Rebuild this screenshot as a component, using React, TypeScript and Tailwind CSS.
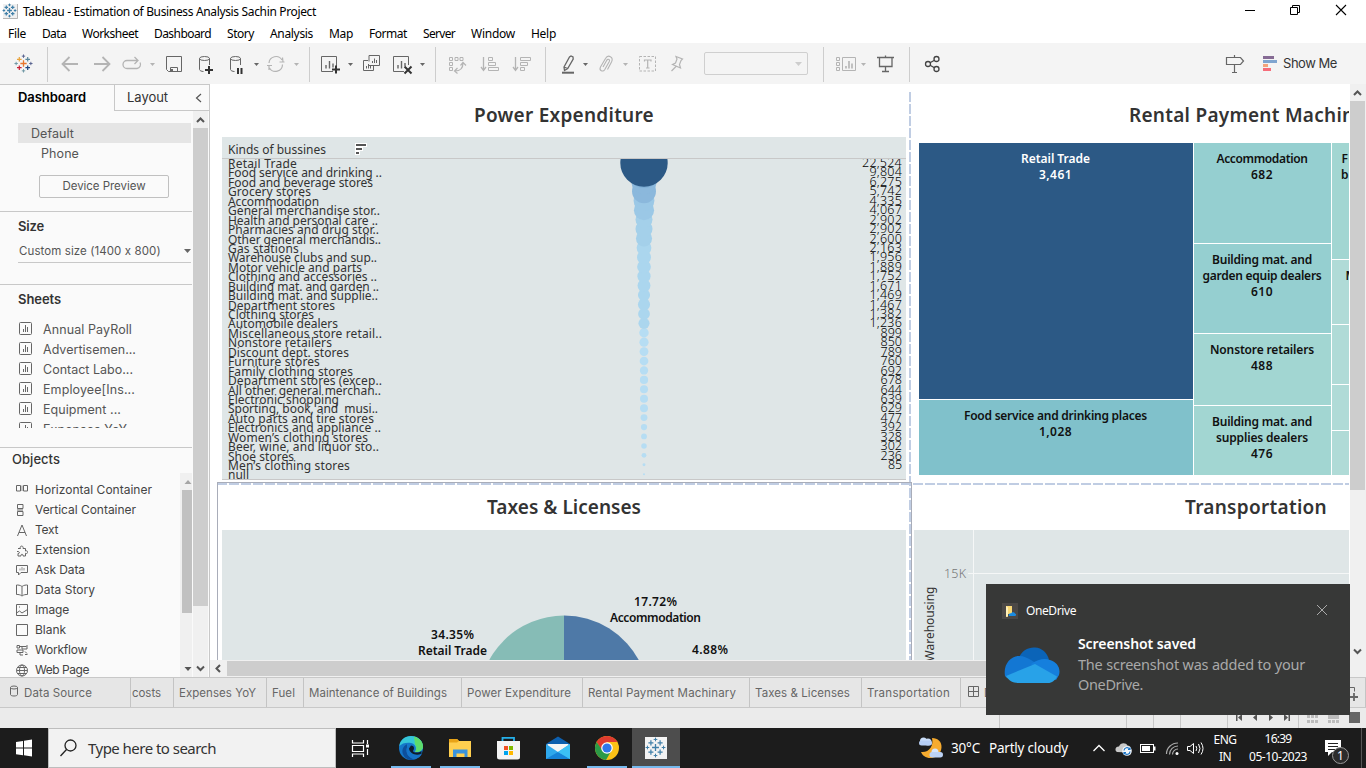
import React, { useLayoutEffect, useRef, useState } from "react";

const NOTO = "font-['Noto_Sans','Open_Sans',sans-serif]";
const INTER = "font-['Inter','Noto_Sans',sans-serif]";

/* Single line of text tracked to an exact width. */
function Fit({ w, children, className = "" }: { w: number; children: string; className?: string }) {
  const ref = useRef<HTMLSpanElement>(null);
  const [ls, setLs] = useState(0);
  useLayoutEffect(() => {
    if (!ref.current) return;
    const natural = ref.current.getBoundingClientRect().width;
    setLs((w - natural) / Math.max(1, children.length));
  }, [w, children]);
  return (
    <span className={"block shrink-0 whitespace-pre " + className} style={{ width: w }}>
      <span ref={ref} className="inline-block" style={{ letterSpacing: ls }}>
        {children}
      </span>
    </span>
  );
}

/* Slice of a bar: user units equal page pixels, so neighbours tile without gaps. */
function Strip({ x, to, y, h, children }: { x: number; to: number; y: number; h: number; children?: React.ReactNode }) {
  return (
    <svg className="block shrink-0" width={to - x} height={h} viewBox={`${x} ${y} ${to - x} ${h}`} fill="none">
      {children}
    </svg>
  );
}

const Tool = ({ x, to, children }: { x: number; to: number; children?: React.ReactNode }) => (
  <Strip x={x} to={to} y={43} h={41}>
    {children}
  </Strip>
);
const Divider = () => <div className="mt-1 h-[35px] w-px shrink-0 bg-[#cdcdcd]" />;
const caret = (x: number, c = "#666") => <path d={`M${x} 63h5l-2.5 3z`} fill={c} />;

function Plus({ x, y, r, c, s = 1 }: { x: number; y: number; r: number; c: string; s?: number }) {
  return <path d={`M${x - r} ${y}h${2 * r}M${x} ${y - r}v${2 * r}`} stroke={c} strokeWidth={s} />;
}

function TableauMark({ x, y, k = 1, mono = false }: { x: number; y: number; k?: number; mono?: boolean }) {
  const m = (c: string) => (mono ? "#3f7fa8" : c);
  return (
    <g>
      <Plus x={x} y={y} r={3 * k} c={m("#e8762c")} s={1.3} />
      <Plus x={x - 4 * k} y={y - 4 * k} r={2.2 * k} c={m("#e8a33c")} s={1.2} />
      <Plus x={x + 4 * k} y={y - 4 * k} r={2.2 * k} c={m("#5b879b")} s={1.2} />
      <Plus x={x - 4 * k} y={y + 4 * k} r={2.2 * k} c={m("#c72035")} s={1.2} />
      <Plus x={x + 4 * k} y={y + 4 * k} r={2.2 * k} c={m("#1f457e")} s={1.2} />
      <Plus x={x} y={y - 7 * k} r={1.6 * k} c={m("#5b6591")} />
      <Plus x={x} y={y + 7 * k} r={1.6 * k} c={m("#7199a6")} />
      <Plus x={x - 7 * k} y={y} r={1.6 * k} c={m("#7199a6")} />
      <Plus x={x + 7 * k} y={y} r={1.6 * k} c={m("#5b6591")} />
    </g>
  );
}

function TitleBar() {
  return (
    <div className={"flex h-6 shrink-0 items-center bg-white text-[12px] text-black " + NOTO}>
      <Strip x={0} to={23} y={0} h={24}>
        <rect x={3} y={4} width={15} height={15} fill="#f0f0f0" />
        <path d="M3 18.500h14.500V4" stroke="#b5b5b5" />
        <TableauMark x={9.5} y={10.5} k={0.8} mono />
      </Strip>
      <Fit w={293}>Tableau - Estimation of Business Analysis Sachin Project</Fit>
      <div className="flex-1" />
      <Strip x={1235} to={1366} y={0} h={24}>
        <path d="M1245 10.500h10" stroke="#000" />
        <path d="M1290.500 7.500h7v7h-7zM1292.500 7v-1.500h7v7h-1.500" stroke="#000" />
        <path d="M1336 5l10 10M1346 5l-10 10" stroke="#000" strokeWidth={1.1} />
      </Strip>
    </div>
  );
}

const menu: [string, number][] = [
  ["File", 18], ["Data", 24], ["Worksheet", 56], ["Dashboard", 57], ["Story", 27],
  ["Analysis", 43], ["Map", 24], ["Format", 38], ["Server", 32], ["Window", 44], ["Help", 25],
];

function MenuBar() {
  return (
    <div className={"flex h-[19px] shrink-0 items-center gap-4 bg-white pl-2 text-[12px] leading-[19px] text-black " + NOTO}>
      {menu.map(([t, w]) => (
        <Fit key={t} w={w}>{t}</Fit>
      ))}
    </div>
  );
}

function Toolbar() {
  const g = "#b4b4b4";
  const d = "#666";
  return (
    <div className="flex h-[41px] shrink-0 bg-[#f4f4f4]">
      <Tool x={0} to={47}><TableauMark x={23.5} y={63.5} k={1.05} /></Tool>
      <Divider />
      <Tool x={48} to={86}><path d="M78 64H63M69.500 57l-7 7 7 7" stroke={g} strokeWidth={1.8} /></Tool>
      <Tool x={86} to={116}><path d="M94 64h15M102.500 57l7 7-7 7" stroke={g} strokeWidth={1.8} /></Tool>
      <Tool x={116} to={160}>
        <path d="M130 60.500h-3a4 4 0 0 0 0 8h10a4 4 0 0 0 3-6M129 60.500h9M134.500 57l3.500 3.500-3.500 3.500" stroke={g} strokeWidth={1.3} />
        {caret(150, g)}
      </Tool>
      <Tool x={160} to={190}>
        <path d="M166.500 56.500h15v15h-13l-2-2z" stroke={d} />
        <path d="M170.500 71v-3.500h7V71" stroke={d} />
        <path d="M171 69h2v2h-2z" fill={d} />
      </Tool>
      <Tool x={190} to={222}>
        <path d="M209.500 65v-6.500M199.500 58.500v11c0 1 2 2 4 2" stroke={d} />
        <ellipse cx={204.500} cy={58.500} rx={5} ry={2} stroke={d} />
        <path d="M205 70h8M209 66v8" stroke="#333" strokeWidth={2} />
      </Tool>
      <Tool x={222} to={263}>
        <path d="M240.500 65v-6.500M230.500 58.500v11c0 1 2 2 4 2" stroke={d} />
        <ellipse cx={235.500} cy={58.500} rx={5} ry={2} stroke={d} />
        <path d="M238 68v6M241.500 68v6" stroke="#333" strokeWidth={2} />
        {caret(254)}
      </Tool>
      <Tool x={263} to={309}>
        <path d="M269 63a7 7 0 0 1 13-3M282.500 64.500a7 7 0 0 1-13 3.500M279.500 62h5M282.500 57.500l.5 4.500M267 65.500h5M269 70v-4" stroke={g} strokeWidth={1.2} />
        {caret(294, g)}
      </Tool>
      <Divider />
      <Tool x={310} to={356}>
        <path d="M333 71.500h-11.500v-15h15V66" stroke={d} />
        <path d="M326 65v3.500M329.500 61v7.500M333 63.500v4" stroke={d} strokeWidth={1.4} />
        <path d="M332 69.500h8M336 65.500v8" stroke="#333" strokeWidth={2} />
        {caret(348)}
      </Tool>
      <Tool x={356} to={386}>
        <path d="M369 61.500v-6h10.500v10h-10.500M368 60.500h-4.500v10h10V66" stroke={d} />
        <path d="M372.500 61v2M374.500 58.500v4.500M376.500 60v3M366.500 66v2.500M368.500 64v4.500M370.500 66v2.500" stroke={d} />
      </Tool>
      <Tool x={386} to={435}>
        <path d="M404 71.500h-10.500v-15h15V65" stroke={d} />
        <path d="M398 65v3.500M401.500 61v7.500M405 63v3" stroke={d} strokeWidth={1.4} />
        <path d="M404.500 66.500l7 7M411.500 66.500l-7 7" stroke="#333" strokeWidth={2} />
        {caret(420)}
      </Tool>
      <Divider />
      <Tool x={436} to={474}>
        <path d="M449.500 57.500h3v3h-3zM455 57.500h3v3h-3zM460 57.500h3v3h-3zM449.500 62.500h3v3h-3zM449.500 67.500h3v3h-3z" stroke={g} />
        <path d="M455 71c5 0 8-3 8-8M457.500 68l-3 3 3 2.500M460.500 65.500l2.500-3 3 3" stroke={g} strokeWidth={1.2} />
      </Tool>
      <Tool x={474} to={506}>
        <path d="M483.500 57v13M481 67l2.500 3.500 2.500-3.500" stroke={g} strokeWidth={1.3} />
        <path d="M488.500 57.500h4v3h-4zM488.500 62.500h7v3h-7zM488.500 67.500h10v3h-10z" stroke={g} />
      </Tool>
      <Tool x={506} to={545}>
        <path d="M515.500 57v13M513 67l2.500 3.500 2.500-3.500" stroke={g} strokeWidth={1.3} />
        <path d="M520.500 57.500h10v3h-10zM520.500 62.500h7v3h-7zM520.500 67.500h4v3h-4z" stroke={g} />
      </Tool>
      <Divider />
      <Tool x={546} to={592}>
        <path d="M564 67l5.500-10 1.500-1 2 1 .2 2-5.500 9.500-3.200 2zM564 67l3.500 1.500" stroke={d} strokeWidth={1.3} />
        <path d="M562 72.700h12" stroke={d} strokeWidth={2} />
        {caret(583)}
      </Tool>
      <Tool x={592} to={632}>
        <path d="M603 67l4.500-8M607.500 69.500l4-7.500c2.500-5-3.500-8-6-3.500l-5 8.500c-1.800 3.500 2.500 5.500 4.300 2.500l4.500-8c1-2-1.200-3-2.300-1.300" stroke={g} strokeWidth={1.1} />
        {caret(623, g)}
      </Tool>
      <Tool x={632} to={662}>
        <rect x={639.500} y={56.500} width={16} height={14.500} stroke={g} strokeDasharray="2.500 1.500" />
        <path d="M644.500 61.500v-1.500h6.500v1.500M647.700 60v8M646 68h3.500" stroke={g} strokeWidth={1.2} />
      </Tool>
      <Tool x={662} to={704}>
        <path d="M676 56.500l6.500 2.500-1.500 1.500-1.500 4 1 3.500-8-3.500 3-1.500 1.500-4zM676 66.500l-4.500 4.500" stroke={g} strokeWidth={1.2} />
      </Tool>
      <div className="mt-[9px] flex h-[23px] w-[104px] shrink-0 items-center justify-end rounded-[2px] border border-[#cfcfcf] pr-[5px]">
        <svg width="7" height="4"><path d="M0 0h7L3.500 4z" fill="#cdcdcd" /></svg>
      </div>
      <div className="w-[15px] shrink-0" />
      <Divider />
      <Tool x={824} to={870}>
        <path d="M836.500 57.500h3v3h-3zM836.500 62.500h3v3h-3zM836.500 67.500h3v3h-3zM842.500 57.500h13v13h-13z" stroke={g} />
        <path d="M846 66v2.500M849 61v7.500M852 63.500v5" stroke={g} strokeWidth={1.6} />
        {caret(861, g)}
      </Tool>
      <Tool x={870} to={909}>
        <path d="M877 57.500h17M879.500 58v8.500h12.500V58M885.500 55.500v2M885.500 67v4.500M882 71.500h7" stroke={d} strokeWidth={1.3} />
      </Tool>
      <Divider />
      <Tool x={910} to={950}>
        <circle cx={928} cy={64} r={2.500} stroke="#444" strokeWidth={1.3} />
        <circle cx={936.500} cy={59} r={2.500} stroke="#444" strokeWidth={1.3} />
        <circle cx={936.500} cy={69} r={2.500} stroke="#444" strokeWidth={1.3} />
        <path d="M930 62.700l4.500-2.500M930 65.300l4.500 2.500" stroke="#444" strokeWidth={1.3} />
      </Tool>
      <div className="flex-1" />
      <Tool x={1220} to={1256}>
        <path d="M1226.500 57.500h14l3 3.500-3 3.500h-14zM1234.500 55v2.500M1234.500 64.500v8M1232 72.500h5" stroke={d} strokeWidth={1.2} />
      </Tool>
      <Tool x={1256} to={1283}>
        <path d="M1263 56h11v3h-11z" fill="#866b94" />
        <path d="M1263 60h14v3h-14z" fill="#7fa5d0" />
        <path d="M1263 64h5v3h-5z" fill="#f3a47c" />
        <path d="M1263 68h8v3h-8z" fill="#f66d7a" />
      </Tool>
      <Fit w={54} className={"mr-[29px] text-[13px] leading-[40px] text-[#333] " + INTER}>Show Me</Fit>
    </div>
  );
}

const sheets: [string, number][] = [
  ["Annual PayRoll", 89], ["Advertisemen...", 93], ["Contact Labo...", 90],
  ["Employee[Ins...", 92], ["Equipment ...", 78], ["Expenses YoY", 84],
];

const objIcons: React.ReactNode[] = [
  <g><path d="M5 1.500h2v5.500H5z" fill="#c4c4c4" stroke="none" /><path d="M.5 1.500h4v5.500h-4zM7.500 1.500h4v5.500h-4z" /></g>,
  <g><path d="M1 4.500h6v3H1z" fill="#b4b4b4" stroke="none" /><path d="M1.500.500h5.500v4h-5.500zM1.500 7.500h5.500v4h-5.500z" /></g>,
  <path d="M1.500 12L6 1l4.500 11M3 8.500h6" />,
  <path d="M2 4.500h2.500c-1.500-3 3.500-3.500 2.500 0h2.500v2.500c3-1.200 3 3.500 0 2.300V12H7c.8-2.300-2.800-2.300-2 0H2V9.500c2 .5 2-2.500-1-2" />,
  <g><path d="M3 4.500h2V3h2v1h2v2.500H3z" fill="#c4c4c4" stroke="none" /><path d="M.5 1.500h11v7H5L2.500 11V8.500h-2z" /></g>,
  <path d="M6 2.500C4 1 2 1 .5 1v9.500c2 0 3.500 0 5.500 1.500 2-1.500 3.500-1.500 5.500-1.500V1C10 1 8 1 6 2.500zM6 3v8" />,
  <path d="M.5.500h11v11H.500zM.500 9l3-2 2.500 2 5.500-3.500M3 3h1" />,
  <path d="M.5.500h11v11H.500z" />,
  <path d="M1 1.500h2.500v2.500H1zM3.500 2.500h7M11 1v4H6V3M1 6h6v2.500H1zM4 8.500V11h3M9 7.500l2 2M9 10.500h2.500" />,
  <g><circle cx={6} cy={6.5} r={5.500} /><ellipse cx={6} cy={6.5} rx={2.500} ry={5.500} /><path d="M.500 6.500h11M1.500 3.500h9M1.500 9.500h9" /></g>,
];
const objects: [string, number][] = [
  ["Horizontal Container", 117], ["Vertical Container", 101], ["Text", 23], ["Extension", 55], ["Ask Data", 50],
  ["Data Story", 60], ["Image", 34], ["Blank", 31], ["Workflow", 52], ["Web Page", 54],
];

function Sidebar() {
  return (
    <div className={"flex w-[210px] shrink-0 flex-col border-t border-r border-[#c8c8c8] bg-[#fafafa] text-[12.500px] text-[#555] " + INTER}>
      <div className="flex h-[26px] shrink-0 leading-[25px]">
        <Fit w={68} className="ml-[18px] text-[13px] font-semibold text-black">Dashboard</Fit>
        <div className="ml-7 flex flex-1 items-center border-b border-l border-[#c8c8c8] pl-3">
          <Fit w={41} className="text-[13px] text-[#333]">Layout</Fit>
          <svg className="ml-[27px]" width="8" height="10" fill="none"><path d="M6 1L1.500 5 6 9" stroke="#555" strokeWidth="1.200" /></svg>
        </div>
      </div>
      <div className="flex min-h-0 flex-1">
        <div className="flex w-[192px] shrink-0 flex-col overflow-hidden">
          <div className="mt-3 ml-[18px] h-5 w-[173px] shrink-0 bg-[#e5e5e5] pl-[13px] leading-[22px]"><Fit w={43}>Default</Fit></div>
          <div className="h-5 shrink-0 pl-[41px] leading-[22px]"><Fit w={38}>Phone</Fit></div>
          <div className="mt-3 ml-[39px] flex h-[23px] w-[130px] shrink-0 items-center justify-center rounded-[2px] border border-[#c0c0c0] text-[11.500px]"><Fit w={83}>Device Preview</Fit></div>
          <div className="mt-[13px] h-px shrink-0 bg-[#c8c8c8]" />
          <div className="h-[28px] shrink-0 pl-[18px] text-[13px] leading-[29px] font-semibold text-[#333]"><Fit w={26}>Size</Fit></div>
          <div className="ml-[18px] flex h-[23px] w-[173px] shrink-0 items-center justify-between border-b border-[#c8c8c8] pl-px text-[11.500px]">
            <Fit w={143} className="pt-[2px]">Custom size (1400 x 800)</Fit>
            <svg width="7" height="4"><path d="M0 0h7L3.500 4z" fill="#666" /></svg>
          </div>
          <div className="mt-[21px] h-px shrink-0 bg-[#c8c8c8]" />
          <div className="h-[34px] shrink-0 pl-[18px] text-[13px] leading-[28px] font-semibold text-[#333]"><Fit w={43}>Sheets</Fit></div>
          <div className="h-[109px] shrink-0 overflow-hidden">
            {sheets.map(([t, w]) => (
              <div key={t} className="flex h-5 items-center pl-[19px] leading-[20px]">
                <svg className="mr-[11px] -mt-px" width="13" height="13" fill="none" stroke="#666">
                  <rect x=".5" y=".5" width="12" height="12" rx="1" />
                  <path d="M4.500 7v3M6.500 3v7M8.500 5v5" />
                </svg>
                <Fit w={w} className="pt-[2px]">{t}</Fit>
              </div>
            ))}
          </div>
          <div className="mt-[19px] h-px shrink-0 bg-[#c8c8c8]" />
          <div className="h-[25px] shrink-0 pl-3 text-[13px] leading-[23px] font-medium text-[#333]"><Fit w={48}>Objects</Fit></div>
          <div className="flex min-h-0 flex-1">
            <div className="w-[180px] pt-[7px] text-[12px] text-[#444]">
              {objects.map(([t, w], i) => (
                <div key={t} className="flex h-5 items-center pl-4 leading-[20px]">
                  <svg className="mr-[7px]" width="12" height="13" fill="none" stroke="#666">{objIcons[i]}</svg>
                  <Fit w={w}>{t}</Fit>
                </div>
              ))}
            </div>
            <div className="flex flex-1 flex-col bg-[#f0f0f0] pl-[2px]">
              <svg className="h-[17px] w-[10px] shrink-0" viewBox="0 0 10 17"><path d="M2.500 11h7L6 7z" fill="#a5a5a5" /></svg>
              <div className="h-[123px] shrink-0 bg-[#c1c1c1]" />
              <div className="flex-1" />
              <svg className="h-[17px] w-[10px] shrink-0" viewBox="0 0 10 17"><path d="M2.500 7h7L6 11z" fill="#555" /></svg>
            </div>
          </div>
        </div>
        <div className="ml-px flex w-[15px] flex-col bg-[#f0f0f0]">
          <svg width="15" height="17" fill="none" stroke="#555" strokeWidth="2"><path d="M4 11l3.500-3.500L11 11" /></svg>
          <div className="h-[478px] bg-[#cdcdcd]" />
          <div className="flex-1" />
          <svg width="15" height="17" fill="none" stroke="#555" strokeWidth="2"><path d="M4 6.500L7.500 10 11 6.500" /></svg>
        </div>
      </div>
    </div>
  );
}

/* label, right edge, value, printed value */
const kinds: [string, number, number, string][] = [
  ["Retail Trade", 297, 22524, "22,524"], ["Food service and drinking ..", 382, 9804, "9,804"],
  ["Food and beverage stores", 373, 6275, "6,275"], ["Grocery stores", 311, 5742, "5,742"],
  ["Accommodation", 319, 4335, "4,335"], ["General merchandise stor..", 380, 4067, "4,067"],
  ["Health and personal care ..", 378, 2902, "2,902"], ["Pharmacies and drug stor..", 379, 2902, "2,902"],
  ["Other general merchandis..", 381, 2600, "2,600"], ["Gas stations", 299, 2163, "2,163"],
  ["Warehouse clubs and sup..", 377, 1956, "1,956"], ["Motor vehicle and parts", 362, 1889, "1,889"],
  ["Clothing and accessories ..", 377, 1752, "1,752"], ["Building mat. and garden ..", 379, 1671, "1,671"],
  ["Building mat. and supplie..", 378, 1469, "1,469"], ["Department stores", 335, 1467, "1,467"],
  ["Clothing stores", 314, 1382, "1,382"], ["Automobile dealers", 338, 1236, "1,236"],
  ["Miscellaneous store retail..", 382, 899, "899"], ["Nonstore retailers", 332, 850, "850"],
  ["Discount dept. stores", 349, 789, "789"], ["Furniture stores", 320, 760, "760"],
  ["Family clothing stores", 353, 692, "692"], ["Department stores (excep..", 382, 678, "678"],
  ["All other general merchan..", 381, 644, "644"], ["Electronic shopping", 339, 639, "639"],
  ["Sporting, book, and  musi..", 378, 629, "629"], ["Auto parts and tire stores", 374, 477, "477"],
  ["Electronics and appliance ..", 381, 392, "392"], ["Women’s clothing stores", 368, 328, "328"],
  ["Beer, wine, and liquor sto..", 379, 302, "302"], ["Shoe stores", 294, 236, "236"],
  ["Men’s clothing stores", 350, 85, "85"], ["null", 249, 40, ""],
];

const shade = (v: number) =>
  v > 20000 ? "#2c5985" : v > 9000 ? "#7fafd6" : v > 5000 ? "#8bb8dc" : v > 4000 ? "#9bc8e6" : v > 2500 ? "#a4d0ea" : v > 1000 ? "#abd6ee" : "#b6ddf3";

const valueWidth: Record<number, number> = { 6: 40, 5: 32.5, 3: 21.5, 2: 14, 0: 0 };

function PowerPanel() {
  return (
    <div className="flex h-full flex-col pl-3">
      <div className="flex h-[53px] shrink-0 justify-center pt-[11px] pr-[5px] text-[19px] leading-[40px] font-semibold text-[#333]"><Fit w={180}>Power Expenditure</Fit></div>
      <div className="mr-1 flex h-[343px] w-[684px] flex-col border-b border-[#c8c8c8] bg-[#dfe6e7]">
        <div className="flex h-[22px] shrink-0 border-b border-[#c8c8c8] pl-1.5 text-[12px] leading-[25px] text-[#333]">
          <Fit w={98}>Kinds of bussines</Fit>
          <svg className="ml-[29px] mt-[6px]" width="12" height="12">
            <path d="M0 0h12v4H8v4H5v4H0z" fill="#fff" />
            <path d="M1 1h10v2H1zM1 5h6v2H1zM1 9h3v2H1z" fill="#555" />
          </svg>
        </div>
        <div className="flex flex-1 overflow-hidden pl-1.5 pr-1">
          <div className="w-[160px] text-[12px] text-[#333]">
            {kinds.map(([t, e], i) => (
              <div key={i} className="h-[9.450px] leading-[9.450px]"><Fit w={e - 228}>{t}</Fit></div>
            ))}
          </div>
          <svg className="shrink-0" width="460" height="320" viewBox="388 159 460 320">
            {kinds.map(([, , v], i) => ({ v, i })).reverse().map(({ v, i }) => (
              <circle key={i} cx={644} cy={163 + 9.43 * i} r={Math.sqrt(v / 22524) * 23.7} fill={shade(v)} />
            ))}
          </svg>
          <div className="-mt-px flex flex-1 flex-col text-[12.500px] font-light text-black">
            {kinds.map(([, , , s], i) => (
              <div key={i} className="flex h-[9.450px] justify-end leading-[9.450px]"><Fit w={valueWidth[s.length]}>{s}</Fit></div>
            ))}
          </div>
        </div>
      </div>
    </div>
  );
}

function Cell({ lines, ws, className }: { lines?: string[]; ws?: number[]; className: string }) {
  return (
    <div className={"flex shrink-0 flex-col items-center pt-2 pr-px text-[12px] leading-[16px] font-semibold " + className}>
      {lines?.map((l, i) => <Fit key={i} w={ws![i]}>{l}</Fit>)}
    </div>
  );
}

function RentalPanel() {
  return (
    <div className="h-full overflow-hidden pl-2">
      <div className="h-[59px] pt-[11px] pl-[210px] text-[19px] leading-[40px] font-semibold text-[#333]"><Fit w={256}>Rental Payment Machinary</Fit></div>
      <div className="flex h-[332px] gap-px text-[#111]">
        <div className="flex w-[274px] shrink-0 flex-col gap-px">
          <Cell className="h-[256px] bg-[#2c5985] text-white" lines={["Retail Trade", "3,461"]} ws={[69, 33]} />
          <Cell className="h-[75px] bg-[#80c1cb]" lines={["Food service and drinking places", "1,028"]} ws={[183, 33]} />
        </div>
        <div className="flex w-[137px] shrink-0 flex-col gap-px">
          <Cell className="h-[100px] bg-[#95cfd0]" lines={["Accommodation", "682"]} ws={[91, 22]} />
          <Cell className="h-[89px] bg-[#95cfd0]" lines={["Building mat. and", "garden equip dealers", "610"]} ws={[100, 119, 22]} />
          <Cell className="h-[71px] bg-[#a2d6d2]" lines={["Nonstore retailers", "488"]} ws={[104, 22]} />
          <Cell className="h-[69px] bg-[#a2d6d2]" lines={["Building mat. and", "supplies dealers", "476"]} ws={[100, 92, 22]} />
        </div>
        <div className="flex w-[80px] shrink-0 flex-col gap-px">
          <Cell className="h-[116px] bg-[#a2d6d2]" lines={["Food and", "beverage"]} ws={[60, 61]} />
          <Cell className="h-[64px] bg-[#b0dbd7]" lines={["Motor v."]} ws={[52]} />
          <Cell className="h-[59px] bg-[#b0dbd7]" />
          <Cell className="h-[45px] bg-[#b0dbd7]" />
          <Cell className="h-[44px] bg-[#b0dbd7]" />
        </div>
      </div>
    </div>
  );
}

function TaxesPanel() {
  const t = (x: number, y: number, w: number, s: string) => (
    <text x={x} y={y} textLength={w} fontSize={12} fontWeight={600} fill="#111">{s}</text>
  );
  return (
    <div className="flex h-full flex-col pl-3">
      <div className="flex h-[45px] shrink-0 justify-center pr-[5px] text-[19px] leading-[45px] font-semibold text-[#333]"><Fit w={154}>Taxes &amp; Licenses</Fit></div>
      <svg className="block w-[684px] flex-1 bg-[#dfe6e7]" viewBox="222 530 684 130">
        <path d="M564 700.500V615.500A85 85 0 0 1 640.300 663z" fill="#4e79a7" />
        <path d="M564 700.500V615.500A85 85 0 0 0 479 700.500z" fill="#86bcb6" />
        {t(634, 606, 43, "17.72%")}
        {t(610, 622, 91, "Accommodation")}
        {t(431, 639, 43, "34.35%")}
        {t(418, 655, 69, "Retail Trade")}
        {t(692, 654, 36, "4.88%")}
      </svg>
    </div>
  );
}

function TransportPanel() {
  return (
    <div className="flex h-full flex-col pl-[3px]">
      <div className="h-[45px] shrink-0 pl-[271px] text-[19px] leading-[45px] font-semibold text-[#333]"><Fit w={142}>Transportation</Fit></div>
      <svg className="block w-[435px] flex-1 bg-[#dfe6e7]" viewBox="914 530 435 130">
        <path d="M973.500 530v130M968 573.500h382" stroke="#f5f7f7" />
        <text x={944} y={578} textLength={22} fontSize={12.500} fontWeight={300} fill="#777">15K</text>
        <text transform="translate(934 661.500) rotate(-90)" textLength={75} fontSize={12} fill="#333">Warehousing</text>
      </svg>
    </div>
  );
}

function Canvas() {
  return (
    <div className="flex min-w-0 flex-1 flex-col bg-white">
      <div className="flex min-h-0 flex-1">
        <div className={"relative mr-px grid min-w-0 flex-1 grid-cols-[701px_1fr] grid-rows-[401px_1fr] overflow-hidden " + NOTO}>
          <PowerPanel />
          <RentalPanel />
          <TaxesPanel />
          <TransportPanel />
          <div className="absolute top-[8px] left-[699px] h-[568px] w-[2px] bg-[repeating-linear-gradient(to_bottom,#c0cde3_0_10px,#fff_10px_12px)]" />
          <div className="absolute top-[399px] left-[7px] h-[2px] w-[1132px] bg-[repeating-linear-gradient(to_right,#c0cde3_0_10px,#fff_10px_12px)]" />
          <div className="absolute top-[398px] left-[7px] h-[200px] w-[695px] border border-[#a9adb9]" />
        </div>
        <div className="flex w-4 flex-col bg-[#f0f0f0] pr-px">
          <svg width="15" height="17" fill="none" stroke="#555" strokeWidth="2"><path d="M4 11l3.500-3.500L11 11" /></svg>
          <div className="h-[389px] bg-[#cdcdcd]" />
          <div className="flex-1" />
          <svg width="15" height="17" fill="none" stroke="#555" strokeWidth="2"><path d="M4 6.500L7.500 10 11 6.500" /></svg>
        </div>
      </div>
      <div className="flex h-[17px] shrink-0 items-center bg-[#f0f0f0]">
        <svg width="17" height="15" fill="none" stroke="#555" strokeWidth="2"><path d="M10 4L6.500 7.500l3.500 3.500" /></svg>
        <div className="h-[15px] w-[1000px] bg-[#cdcdcd]" />
      </div>
    </div>
  );
}

function Tab({ className, w, children }: { className: string; w: number; children: string }) {
  return <div className={"shrink-0 border-r border-[#c4c4c4] " + className}><Fit w={w}>{children}</Fit></div>;
}

function SheetTabs() {
  return (
    <div className={"flex h-[31px] shrink-0 border-y border-[#c8c8c8] bg-[#e6e6e6] text-[11.500px] leading-[30px] text-[#666] " + INTER}>
      <Strip x={0} to={24} y={678} h={29}>
        <path d="M10.500 687.500v7c0 2 7 2 7 0v-7" stroke="#666" />
        <ellipse cx={14} cy={687.500} rx={3.500} ry={1.500} stroke="#666" />
      </Strip>
      <Tab className="w-[107px]" w={68}>Data Source</Tab>
      <Tab className="w-[43px] pl-px" w={29}>costs</Tab>
      <Tab className="w-[93px] pl-[5px]" w={77}>Expenses YoY</Tab>
      <Tab className="w-[37px] pl-[5px]" w={23}>Fuel</Tab>
      <Tab className="w-[158px] pl-[5px]" w={138}>Maintenance of Buildings</Tab>
      <Tab className="w-[121px] pl-[5px]" w={104}>Power Expenditure</Tab>
      <Tab className="w-[167px] pl-[5px]" w={148}>Rental Payment Machinary</Tab>
      <Tab className="w-[112px] pl-[5px]" w={95}>Taxes &amp; Licenses</Tab>
      <Tab className="w-[99px] pl-[5px]" w={83}>Transportation</Tab>
      <Strip x={961} to={984} y={678} h={29}>
        <path d="M968.500 686.500h10v10h-10zM973.500 686.500v10M968.500 691.500h10" stroke="#666" />
      </Strip>
      <Fit w={60}>Dashboard</Fit>
      <div className="flex-1" />
      <Strip x={1340} to={1366} y={678} h={29}>
        <path d="M1350 697h8M1354 693v8" stroke="#666" strokeWidth={1.8} />
        <path d="M1350 687.500h4.500v4" stroke="#666" />
        <path d="M1365.500 678v29" stroke="#c4c4c4" />
      </Strip>
    </div>
  );
}

function StatusBar() {
  return (
    <div className="flex h-[20px] shrink-0 justify-end bg-[#ebebeb]">
      <Strip x={980} to={1366} y={708} h={20}>
        <path d="M999.500 708v20M1126.500 708v20M1153.500 708v20M1180.500 708v20M1227.500 708v20M1298.500 708v20" stroke="#c8c8c8" />
        <path d="M1236 714h1.500v7h-1.500zM1242 714v7l-4-3.500zM1257 714v7l-4-3.500zM1269 714v7l4-3.500zM1284 714v7l4-3.500zM1288.500 714h1.500v7h-1.500z" fill="#555" />
        <path d="M1307 715h3v3h-3zM1311 715h3v3h-3zM1315 715h3v3h-3zM1307 720h3v3h-3zM1311 720h3v3h-3zM1315 720h3v3h-3zM1328 714h11v5h-11zM1328 720h3v3h-3zM1332 720h3v3h-3zM1336 720h3v3h-3z" fill="#bcbcbc" />
        <path d="M1349 712h11v11h-11z" fill="#666" />
      </Strip>
    </div>
  );
}

function Toast() {
  return (
    <div className={"absolute top-[584px] left-[986px] flex h-[131px] w-[364px] flex-col bg-[#373837] text-white " + NOTO}>
      <div className="flex h-[52px] items-center pl-4 text-[12px]">
        <svg className="mt-px" width="16" height="16">
          <path d="M0 0h16v16H0z" fill="#4b4846" />
          <path d="M4 3h6v8H6l-1 3H4z" fill="#f8d775" />
          <path d="M4 3l2 1.500V14l-2-1z" fill="#fff0b8" />
          <path d="M7 13c-1-2 1-3 2-2.500 1-2 3.500-1.500 4 0 1.500 0 1.500 2.500 0 2.500z" fill="#1b8be0" />
        </svg>
        <Fit w={50} className="ml-2 pt-[2px]">OneDrive</Fit>
        <svg className="ml-[240px]" width="12" height="12" stroke="#aaa"><path d="M1 1l10 10M11 1L1 11" /></svg>
      </div>
      <div className="flex pl-[18px]">
        <svg className="mt-[10px]" width="56" height="38" viewBox="1004 646 56 38">
          <path d="M1018 660c3-10 11-13 17-12.500 7 .5 12 5 14 12l-14 7z" fill="#0b64b8" />
          <path d="M1005 676c-2-12 6-20 14-20 5 0 8 2 12 4l11 7-35 11z" fill="#1377d3" />
          <path d="M1031 664c7-5 14-6 19-4 7 2 11 8 9 15l-3 5-20-10z" fill="#157fdd" />
          <path d="M1006 676l29-12 22 12.500c-2 4-5 6.500-9 6.500h-29c-6 0-10-2-13-7z" fill="#28a2e8" />
        </svg>
        <div className="-mt-[2px] ml-[18px] text-[14.500px] leading-[20px] text-[#a9a9a9]">
          <Fit w={118} className="text-[14px] font-semibold text-white">Screenshot saved</Fit>
          <Fit w={227}>The screenshot was added to your</Fit>
          <Fit w={65}>OneDrive.</Fit>
        </div>
      </div>
    </div>
  );
}

const Task = ({ x, to, run, active, children }: { x: number; to: number; run?: boolean; active?: boolean; children: React.ReactNode }) => (
  <Strip x={x} to={to} y={728} h={40}>
    {active && <rect x={x} y={728} width={to - x} height={40} fill="#4d4d4d" />}
    {children}
    {run && <rect x={active ? x : x + 4} y={766} width={active ? to - x : 40} height={2} fill="#76b9ed" />}
  </Strip>
);

function Taskbar() {
  return (
    <div className={"flex h-10 shrink-0 bg-[#1c1c1c] text-white " + NOTO}>
      <Task x={0} to={48}>
        <path d="M16 742l7-1v6.500h-7zM24 740.800l8-1.200v7.900h-8zM16 748.500h7v6.700l-7-1zM24 748.500h8v8l-8-1.200z" fill="#fff" />
      </Task>
      <div className="flex h-10 w-[288px] shrink-0 items-center border border-[#bdbdbd] bg-[#f2f2f2] text-[15px] text-[#333]">
        <svg className="ml-[11px]" width="17" height="18" fill="none" stroke="#222" strokeWidth="1.300"><circle cx="10.500" cy="6.500" r="5.500" /><path d="M6.500 10.500L.500 17" /></svg>
        <Fit w={128} className="ml-[11px]">Type here to search</Fit>
      </div>
      <Task x={336} to={387}>
        <path d="M352.500 740v3h11v-3M352.500 745.500h11v6h-11zM352.500 757v-3h11v3M367.500 740v4M367.500 749v6" stroke="#fff" strokeWidth={1.200} />
        <path d="M366 744.500h3v3h-3z" fill="#fff" />
      </Task>
      <Task x={387} to={436} run>
        <circle cx={411} cy={748} r={12} fill="#1577c9" />
        <path d="M399.300 746C400 740 405 736 411 736c7 0 12 5 12 10.500 0 4-4 6-8 5.500 2-3 1-8-4-9-5-.8-9 .5-11.700 3z" fill="#36c6d8" />
        <path d="M414 736.500c6 1.500 9 6 9 10 0 4-4 6-8 5.500 2-3 1.500-6 0-7.500z" fill="#5ddc6c" />
        <path d="M407 747c-2 7 3 12 8 12.200-4 2-10 0-12-5-1.500-4 0-8 4-10z" fill="#0d4f9c" />
        <path d="M410 745.500c-3 3-1 9 5 9.500 3 .5 5 0 7-1.500-1 3-4 5-7 5.500-6-.5-10-6-8-11.500z" fill="#1673c8" />
        <path d="M411 745.500c3 0 4 3 2 5.500.5 2 6 2 8.500 0v2.500c-5 3-12 0-12.500-5z" fill="#0f1c2c" />
      </Task>
      <Task x={436} to={484} run>
        <path d="M449 739h8l2 2h12v16h-22z" fill="#ffcf4f" />
        <path d="M449 739h8l2 2-2 1.500h-8z" fill="#e8a317" />
        <path d="M453 749.500h14.500v7.500h-3v-3.500h-8v3.500H453z" fill="#3993dc" />
      </Task>
      <Task x={484} to={533}>
        <path d="M502.500 742v-4.200h11.500V742" stroke="#25b0ea" strokeWidth={1.800} />
        <path d="M497 741h23v16q0 2.500-2.500 2.500h-18q-2.500 0-2.500-2.500z" fill="#f4f4f4" />
        <path d="M504 746h4v4h-4z" fill="#f25022" /><path d="M509 746h4v4h-4z" fill="#7fba00" />
        <path d="M504 751h4v4h-4z" fill="#00a4ef" /><path d="M509 751h4v4h-4z" fill="#ffb900" />
      </Task>
      <Task x={533} to={583}>
        <path d="M546 744l12-7.500 12 7.500-12 8z" fill="#0d5fae" />
        <path d="M547.500 744h21v6l-10.500 4-10.500-5z" fill="#f5f5f5" />
        <path d="M546 744l12 8 12-8v15h-24z" fill="#2fa8ec" />
        <path d="M546 759l12-7 12 7z" fill="#1683d8" />
        <path d="M558 752l12-8v15z" fill="#3bc0f5" />
      </Task>
      <Task x={583} to={632} run>
        <circle cx={607} cy={748} r={12} fill="#fbc116" />
        <path d="M596.600 742A12 12 0 0 1 617.400 742H607l-5 9z" fill="#df3b2f" />
        <path d="M596.600 742A12 12 0 0 0 606 760l5.500-9.500h-9z" fill="#2b9a47" />
        <circle cx={607} cy={748} r={5.800} fill="#fff" /><circle cx={607} cy={748} r={4.600} fill="#2f77ea" />
      </Task>
      <Task x={632} to={680} run active>
        <rect x={645} y={737} width={22} height={22} fill="#f3f3f3" />
        <TableauMark x={655.5} y={747.5} mono k={1.15} />
      </Task>
      <div className="flex-1" />
      <Strip x={910} to={951} y={728} h={40}>
        <path d="M932 738c6 0 10 4 9.500 9.500-.5 6-5 10.500-11 10.500-5 0-8-2.500-9.500-6 8 1 13-6 11-14z" fill="#f6ab2f" />
        <circle cx={923.500} cy={741} r={3.500} fill="#c9ddf9" /><circle cx={928} cy={742} r={3.500} fill="#c9ddf9" /><rect x={919} y={740.500} width={13} height={5} rx={2.500} fill="#b5cdf3" />
        <circle cx={935} cy={752} r={3.500} fill="#d6e5fb" /><rect x={929.500} y={752} width={13.500} height={5.500} rx={2.700} fill="#bcd2f5" />
      </Strip>
      <div className="flex text-[13.500px] leading-[40px]">
        <Fit w={29}>30°C</Fit>
        <Fit w={79} className="ml-[9px]">Partly cloudy</Fit>
      </div>
      <Strip x={1068} to={1213} y={728} h={40}>
        <path d="M1093.500 751l5.500-5.500 5.500 5.500" stroke="#fff" strokeWidth={1.300} />
        <path d="M1117 752c-3-2-1-6 2-5.500 1-4 7-4.500 8.500-1 3 0 4 3 3 5l-3 2z" fill="#c9c9c9" />
        <circle cx={1127} cy={751} r={4.800} fill="#f4f8fc" />
        <path d="M1124 750.500a3 3 0 0 1 5.500-1.500M1130 751.500a3 3 0 0 1-5.500 1.500M1130 747.500v2h-2M1124 754.500v-2h2" stroke="#1a73c4" strokeWidth={1.200} />
        <rect x={1140.500} y={744.500} width={13} height={8} stroke="#fff" /><path d="M1142 746h8v5h-8zM1154 746.500h1.500v4H1154z" fill="#fff" />
        <path d="M1166.500 754c0-6 5-11 11.500-11M1169.500 754.500c0-5 4-8.500 8.500-8.500M1172.500 754.500c0-3 2.500-5.500 5.500-5.500" stroke="#aaa" strokeWidth={1.200} />
        <circle cx={1177} cy={753.500} r={1.500} fill="#fff" />
        <path d="M1187.500 746.500h2.500l3.500-3v10l-3.500-3h-2.500zM1196 746q1.500 2.500 0 5M1198.500 744q3 4.500 0 9M1201 742.500q4 6 0 12" stroke="#fff" />
      </Strip>
      <div className="flex w-[24px] flex-col items-center pt-[3px] text-[12px] leading-[17px]">
        <Fit w={23}>ENG</Fit><Fit w={12}>IN</Fit>
      </div>
      <div className="ml-[12px] flex w-[58px] flex-col items-center pt-[2px] text-[12px] leading-[18px]">
        <Fit w={27}>16:39</Fit><Fit w={58}>05-10-2023</Fit>
      </div>
      <Strip x={1307} to={1366} y={728} h={40}>
        <path d="M1325 740h16v12h-9l-4 4v-4h-3z" fill="#fff" />
        <path d="M1328 743.500h10M1328 746.500h10M1328 749.500h7" stroke="#222" />
        <circle cx={1340.500} cy={755.500} r={8} fill="#2c2c2c" stroke="#999" />
        <text x={1337} y={760} fontSize={12} fill="#fff">1</text>
        <path d="M1361.500 728v40" stroke="#555" />
      </Strip>
    </div>
  );
}

export default function App() {
  return (
    <div className="relative flex h-[768px] w-[1366px] flex-col overflow-hidden bg-white">
      <TitleBar />
      <MenuBar />
      <Toolbar />
      <div className="flex h-[593px] shrink-0">
        <Sidebar />
        <Canvas />
      </div>
      <SheetTabs />
      <StatusBar />
      <Taskbar />
      <Toast />
    </div>
  );
}
